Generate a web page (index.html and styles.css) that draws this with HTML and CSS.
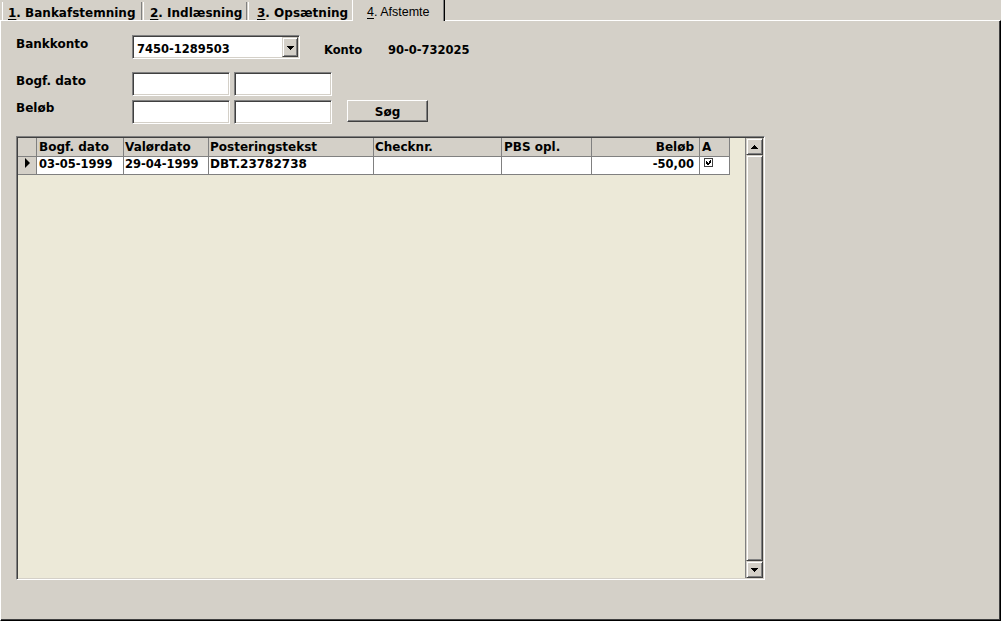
FILE: index.html
```html
<!DOCTYPE html>
<html>
<head>
<meta charset="utf-8">
<title>Bankafstemning</title>
<link rel="stylesheet" href="styles.css">
</head>
<body>
<div class="tabs">
  <div class="tab t1"><u>1</u>. Bankafstemning</div>
  <div class="tab t2"><u>2</u>. Indlæsning</div>
  <div class="tab t3"><u>3</u>. Opsætning</div>
  <div class="tab t4"><u>4</u>. Afstemte</div>
</div>
<div class="panel">
  <div class="row r1">
    <div class="label">Bankkonto</div>
    <div class="combo">
      <span class="combo-text num">7450-1289503</span>
      <span class="combo-btn"><svg width="7" height="4" viewBox="0 0 7 4" shape-rendering="crispEdges"><path d="M0 0h7v1H0z M1 1h5v1H1z M2 2h3v1H2z M3 3h1v1H3z" fill="#000"/></svg></span>
    </div>
    <div class="konto-label">Konto</div>
    <div class="konto-value num">90-0-732025</div>
  </div>
  <div class="row r2">
    <div class="label">Bogf. dato</div>
    <div class="field"></div>
    <div class="field second"></div>
  </div>
  <div class="row r3">
    <div class="label l3">Beløb</div>
    <div class="field"></div>
    <div class="field second"></div>
    <div class="button">Søg</div>
  </div>
  <div class="grid">
    <div class="grid-body">
      <div class="grow head">
        <div class="cell ind"></div>
        <div class="cell c1">Bogf. dato</div>
        <div class="cell c2">Valørdato</div>
        <div class="cell c3">Posteringstekst</div>
        <div class="cell c4">Checknr.</div>
        <div class="cell c5">PBS opl.</div>
        <div class="cell c6">Beløb</div>
        <div class="cell c7">A</div>
      </div>
      <div class="grow data">
        <div class="cell ind"><svg class="pointer" width="6" height="10" viewBox="0 0 6 10"><polygon points="0,0 5,5 0,10" fill="#000"/></svg></div>
        <div class="cell c1 num">03-05-1999</div>
        <div class="cell c2 num">29-04-1999</div>
        <div class="cell c3">DBT.23782738</div>
        <div class="cell c4"></div>
        <div class="cell c5"></div>
        <div class="cell c6 num">-50,00</div>
        <div class="cell c7"><svg class="check" width="9" height="9" viewBox="0 0 9 9" shape-rendering="crispEdges"><rect x="0.5" y="0.5" width="8" height="8" fill="#fff" stroke="#404040"/><path d="M2 3h1v3H2z M3 4h1v3H3z M4 5h1v2H4z M5 3h1v3H5z M6 2h1v3H6z" fill="#000"/></svg></div>
      </div>
    </div>
    <div class="scroll">
      <div class="sbtn"><svg width="7" height="4" viewBox="0 0 7 4" shape-rendering="crispEdges"><path d="M3 0h1v1H3z M2 1h3v1H2z M1 2h5v1H1z M0 3h7v1H0z" fill="#000"/></svg></div>
      <div class="sthumb"></div>
      <div class="sbtn"><svg width="7" height="4" viewBox="0 0 7 4" shape-rendering="crispEdges"><path d="M0 0h7v1H0z M1 1h5v1H1z M2 2h3v1H2z M3 3h1v1H3z" fill="#000"/></svg></div>
    </div>
  </div>
</div>
</body>
</html>
```
FILE: styles.css
```css
* { box-sizing: border-box; }
html, body { margin: 0; padding: 0; }
body {
  width: 1001px;
  height: 621px;
  overflow: hidden;
  background: #D4D0C8;
  font-family: "DejaVu Sans", sans-serif;
  font-weight: bold;
  font-size: 12px;
  color: #000;
}
.num { font-size: 11.5px; }

/* Tabs */
.tabs {
  display: flex;
  align-items: flex-end;
  height: 20px;
}
.tab {
  height: 18px;
  padding-top: 4px;
  line-height: 14px;
  white-space: nowrap;
  border-left: 1px solid #fff;
}
.tab u { text-underline-offset: 2px; }
.t1 { margin-left: 2px; width: 140px; padding-left: 5px; border-right: 1px solid #808080; }
.t2 { margin-left: 1px; width: 104px; padding-left: 6px; border-right: 1px solid #808080; }
.t3 { margin-left: 1px; width: 104px; padding-left: 8px; }
.t4 {
  position: relative;
  z-index: 1;
  width: 93px;
  height: 21px;
  margin-bottom: -1px;
  padding-left: 14px;
  padding-top: 5px;
  font-family: "Liberation Sans", Arial, sans-serif;
  font-weight: normal;
  font-size: 12.5px;
  background: #D4D0C8;
  border-right: 1px solid #000;
  box-shadow: inset -1px 0 #808080;
}

/* Panel */
.panel {
  height: 601px;
  border-top: 1px solid #fff;
  border-left: 1px solid #fff;
  border-right: 1px solid #000;
  border-bottom: 1px solid #000;
  box-shadow: inset -1px -1px #404040;
  padding: 14px 0 0 15px;
}
.row { display: flex; height: 24px; }
.r2 { margin-top: 13px; }
.r3 { margin-top: 4px; }
.label { width: 116px; padding-top: 2px; line-height: 14px; }
.l3 { padding-top: 1px; }

.combo {
  display: flex;
  width: 168px;
  height: 24px;
  background: #fff;
  border: 1px solid;
  border-color: #808080 #fff #fff #808080;
  box-shadow: inset 1px 1px #404040, inset -1px -1px #D4D0C8;
}
.combo-text { flex: 1; padding: 6px 0 0 4px; line-height: 14px; }
.combo-btn {
  display: flex;
  align-items: center;
  justify-content: center;
  width: 16px;
  height: 20px;
  margin: 1px 1px 0 0;
  background: #D4D0C8;
  border: 1px solid;
  border-color: #D4D0C8 #404040 #404040 #D4D0C8;
  box-shadow: inset 1px 1px #fff, inset -1px -1px #808080;
}
.combo-btn svg { display: block; margin: 1px 0 0 1px; }
.konto-label { margin-left: 24px; width: 64px; padding-top: 8px; line-height: 14px; font-size: 11.5px; }
.konto-value { padding-top: 8px; line-height: 14px; }

.field {
  width: 98px;
  height: 24px;
  background: #fff;
  border: 1px solid;
  border-color: #808080 #fff #fff #808080;
  box-shadow: inset 1px 1px #404040, inset -1px -1px #D4D0C8;
}
.field.second { margin-left: 4px; }
.button {
  margin-left: 15px;
  width: 81px;
  height: 22px;
  padding-top: 4px;
  line-height: 14px;
  text-align: center;
  border: 1px solid;
  border-color: #fff #404040 #404040 #fff;
  box-shadow: inset -1px -1px #808080;
}

/* Grid */
.grid {
  display: flex;
  margin-top: 12px;
  width: 749px;
  height: 444px;
  padding: 1px;
  background: #ECE9D8;
  border: 1px solid;
  border-color: #808080 #fff #fff #808080;
  box-shadow: inset 1px 1px #404040, inset -1px -1px #D4D0C8;
}
.grid-body {
  flex: 1;
  border-right: 1px solid #808080;
}
.grow { display: flex; }
.cell {
  border-right: 1px solid #808080;
  border-bottom: 1px solid #808080;
  white-space: nowrap;
  overflow: hidden;
}
.head .cell {
  height: 19px;
  padding-top: 2px;
  line-height: 14px;
  background: #D4D0C8;
}
.data .cell {
  height: 18px;
  padding-top: 1px;
  line-height: 13px;
  background: #fff;
}
.data .cell.ind { background: #D4D0C8; }
.ind { width: 19px; }
.c1 { width: 87px; padding-left: 2px; }
.c2 { width: 85px; padding-left: 1px; }
.c3 { width: 165px; padding-left: 1px; }
.c4 { width: 128px; padding-left: 1px; }
.c5 { width: 90px; padding-left: 2px; }
.c6 { width: 108px; padding-right: 5px; text-align: right; }
.c7 { width: 30px; padding-left: 2px; }
.pointer { display: block; margin: 0 0 0 7px; }
.check { display: block; margin: 0 0 0 2px; }

.scroll {
  display: flex;
  flex-direction: column;
  width: 17px;
}
.sbtn, .sthumb {
  background: #D4D0C8;
  border: 1px solid;
  border-color: #D4D0C8 #404040 #404040 #D4D0C8;
  box-shadow: inset 1px 1px #fff, inset -1px -1px #808080;
}
.sbtn {
  display: flex;
  align-items: center;
  justify-content: center;
  height: 17px;
}
.sbtn svg { display: block; }
.sthumb { flex: 1; }
```
